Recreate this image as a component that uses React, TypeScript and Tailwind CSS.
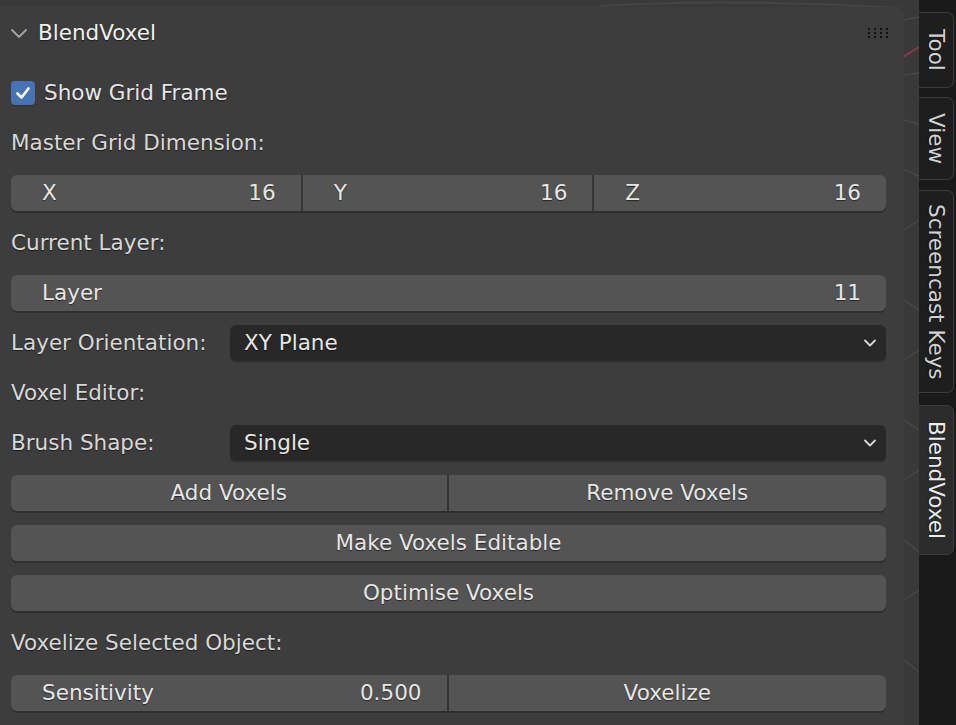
import { ChevronDown } from "lucide-react";

const font = "font-['DejaVu_Sans',_'Liberation_Sans',_sans-serif]";
const shadow = "[text-shadow:0_1px_1px_rgba(0,0,0,0.55)]";

const tabs = [
  { label: "Tool", h: "h-[76px]", mt: "mt-[12px]", active: false },
  { label: "View", h: "h-[83px]", mt: "mt-[9px]", active: false },
  { label: "Screencast Keys", h: "h-[203px]", mt: "mt-[10px]", active: false },
  { label: "BlendVoxel", h: "h-[150px]", mt: "mt-[12px]", active: true },
];

const Label = ({ children }: { children: React.ReactNode }) => (
  <div className="h-[50px] flex items-center text-[#d8d8d8]">{children}</div>
);

const Field = ({ label, value, className = "" }: { label: string; value: string; className?: string }) => (
  <div className={`min-w-0 h-full flex items-center justify-between pl-[31px] pr-[25px] bg-[#545454] ${className}`}>
    <span>{label}</span>
    <span>{value}</span>
  </div>
);

const Button = ({ children, className = "" }: { children: React.ReactNode; className?: string }) => (
  <div className={`min-w-0 h-full flex items-center justify-center bg-[#545454] ${className}`}>{children}</div>
);

const Row = ({ children, cols = "grid-cols-1" }: { children: React.ReactNode; cols?: string }) => (
  <div className="h-[50px] flex items-center">
    <div className={`w-full h-[36px] grid ${cols} rounded-[6px] overflow-hidden shadow-[0_2px_0_#2f2f2f]`}>{children}</div>
  </div>
);

const Dropdown = ({ label, value }: { label: string; value: string }) => (
  <div className="h-[50px] flex items-center">
    <div className="w-[219px] text-[#d8d8d8]">{label}</div>
    <div className="flex-1 h-[36px] flex items-center justify-between pl-[14px] pr-[6px] bg-[#282828] rounded-[6px] shadow-[0_2px_0_#343434]">
      <span>{value}</span>
      <ChevronDown size={20} strokeWidth={2.2} className="text-[#d6d6d6]" />
    </div>
  </div>
);

const Grip = () => (
  <svg width="22" height="10" viewBox="0 0 22 10">
    {[0, 1, 2, 3].map((c) =>
      [0, 1, 2].map((r) => <rect key={`${c}-${r}`} x={c * 6} y={r * 4} width="2" height="2" fill="#111" />)
    )}
  </svg>
);

export default function App() {
  return (
    <div className={`flex w-[956px] h-[725px] overflow-hidden bg-[#393939] text-[21.5px] text-[#e6e6e6] ${font} ${shadow}`}>
      <div className="relative flex-1">
        {/* viewport wireframe behind the panel */}
        <svg className="absolute inset-0" width="919" height="725">
          <path d="M600 6 Q 720 -2 900 8" stroke="#444444" strokeWidth="2" fill="none" />
          <path d="M903 57 L919 47" stroke="#8a3a44" strokeWidth="2" />
          <path d="M904 20 L919 17 M904 75 L919 73 M904 120 L919 124 M904 170 L919 176 M904 230 L919 220 M904 300 L919 310 M904 360 L919 350 M904 420 L919 430 M904 480 L919 470 M904 540 L919 552 M904 600 L919 590 M904 660 L919 672" stroke="#474747" strokeWidth="1.5" />
        </svg>
        <div className="relative mt-[7px] w-[904px] h-full bg-[#3d3d3d] rounded-tr-[8px] pt-[1px] pl-[11px] pr-[18px]">
          <div className="h-[50px] flex items-center justify-between -ml-[1px]">
            <div className="flex items-center">
              <svg width="18" height="12" viewBox="0 0 18 12" className="mr-[10px]">
                <path d="M1.5 2.5 L9 10 L16.5 2.5" stroke="#a8a8a8" strokeWidth="1.8" fill="none" />
              </svg>
              <span className="text-[#f0f0f0]">BlendVoxel</span>
            </div>
            <div className="mr-[-4px]">
              <Grip />
            </div>
          </div>
          <div className="h-[10px]" />
          <div className="h-[50px] flex items-center">
            <div className="w-[24px] h-[24px] rounded-[4px] bg-[#4772b3] flex items-center justify-center shadow-[0_1px_0_#2f2f2f]">
              <svg width="18" height="18" viewBox="0 0 18 18">
                <path d="M3.5 9.5 L7.5 13.5 L14.5 4.5" stroke="#ffffff" strokeWidth="2.6" fill="none" strokeLinecap="round" strokeLinejoin="round" />
              </svg>
            </div>
            <span className="ml-[9px]">Show Grid Frame</span>
          </div>
          <Label>Master Grid Dimension:</Label>
          <Row cols="grid-cols-3">
            <Field label="X" value="16" className="border-r-2 border-[#363636]" />
            <Field label="Y" value="16" className="border-r-2 border-[#363636]" />
            <Field label="Z" value="16" />
          </Row>
          <Label>Current Layer:</Label>
          <Row>
            <Field label="Layer" value="11" />
          </Row>
          <Dropdown label="Layer Orientation:" value="XY Plane" />
          <Label>Voxel Editor:</Label>
          <Dropdown label="Brush Shape:" value="Single" />
          <Row cols="grid-cols-2">
            <Button className="border-r-2 border-[#363636]">Add Voxels</Button>
            <Button>Remove Voxels</Button>
          </Row>
          <Row>
            <Button>Make Voxels Editable</Button>
          </Row>
          <Row>
            <Button>Optimise Voxels</Button>
          </Row>
          <Label>Voxelize Selected Object:</Label>
          <Row cols="grid-cols-2">
            <Field label="Sensitivity" value="0.500" className="border-r-2 border-[#363636]" />
            <Button>Voxelize</Button>
          </Row>
        </div>
      </div>
      <div className="w-[37px] h-full bg-[#1a1a1a] flex flex-col">
        {tabs.map((t) => (
          <div
            key={t.label}
            className={`${t.h} ${t.mt} w-[35px] flex items-center justify-center rounded-r-[7px] border border-l-0 border-[#3b3b3b] ${
              t.active ? "bg-[#2c2c2c] text-[#ececec]" : "bg-[#1e1e1e] text-[#d2d2d2]"
            }`}
          >
            <span className="[writing-mode:vertical-rl] leading-none">{t.label}</span>
          </div>
        ))}
      </div>
    </div>
  );
}
